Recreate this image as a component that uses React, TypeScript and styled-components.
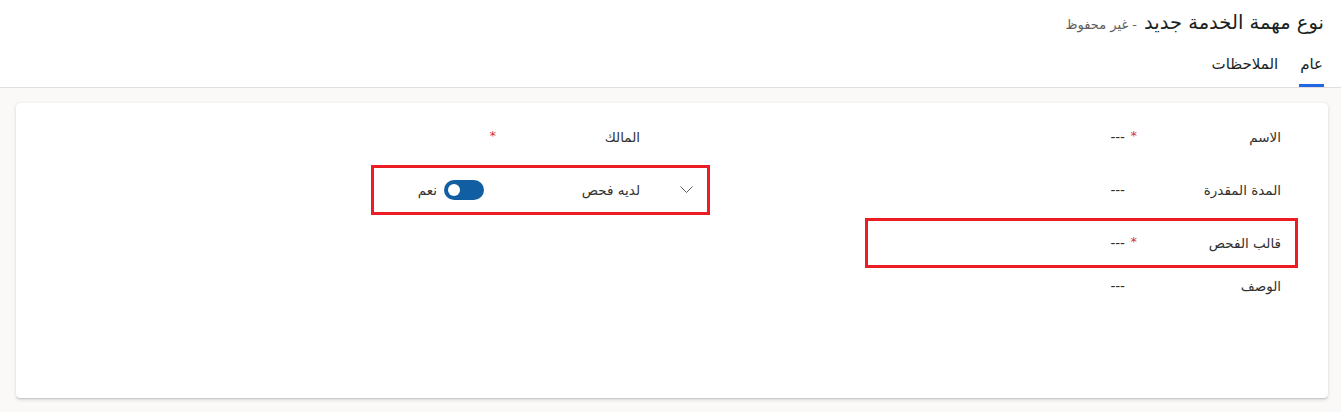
import React from 'react';
import styled, { createGlobalStyle } from 'styled-components';

const GlobalStyle = createGlobalStyle`
  html, body {
    margin: 0;
    padding: 0;
    background: #faf9f8;
    font-family: 'DejaVu Sans', 'Noto Sans', sans-serif;
    color: #323130;
  }
  #root {
    direction: rtl;
  }
`;

interface FieldData {
  label: string;
  required?: boolean;
  value?: string;
  toggle?: boolean;
  chevron?: boolean;
  highlighted?: boolean;
  tall?: boolean;
}

const rightFields: FieldData[] = [
  { label: 'الاسم', required: true, value: '---' },
  { label: 'المدة المقدرة', value: '---' },
  { label: 'قالب الفحص', required: true, value: '---', highlighted: true },
  { label: 'الوصف', value: '---', tall: true },
];

const leftFields: FieldData[] = [
  { label: 'المالك', required: true, value: '' },
  { label: 'لديه فحص', toggle: true, chevron: true, highlighted: true },
];

const App = () => {
  return (
    <>
      <GlobalStyle />
      <Page>
        <Header>
          <TitleRow>
            <Title>نوع مهمة الخدمة جديد</Title>
            <SubTitle>- غير محفوظ</SubTitle>
          </TitleRow>
          <Tabs>
            <Tab active>عام</Tab>
            <Tab>الملاحظات</Tab>
          </Tabs>
        </Header>
        <Main>
          <Card>
            <Column width={433}>
              {rightFields.map((f) => (
                <Field key={f.label} data={f} />
              ))}
            </Column>
            <Column width={339}>
              {leftFields.map((f) => (
                <Field key={f.label} data={f} withIconSlot />
              ))}
            </Column>
          </Card>
        </Main>
      </Page>
    </>
  );
};

const Field = ({
  data,
  withIconSlot,
}: {
  data: FieldData;
  withIconSlot?: boolean;
}) => (
  <FieldRow highlighted={!!data.highlighted} tall={!!data.tall}>
    {withIconSlot && (
      <IconSlot>
        {data.chevron && (
          <svg width='13' height='8' viewBox='0 0 13 8'>
            <polyline
              points='0.5,0.5 6.5,6.5 12.5,0.5'
              fill='none'
              stroke='#605e5c'
              strokeWidth='1'
            />
          </svg>
        )}
      </IconSlot>
    )}
    <Label>{data.label}</Label>
    <Required>{data.required ? '*' : ''}</Required>
    <Value>
      {data.toggle ? (
        <ToggleWrap>
          <Switch>
            <Knob />
          </Switch>
          <ToggleText>نعم</ToggleText>
        </ToggleWrap>
      ) : (
        data.value
      )}
    </Value>
  </FieldRow>
);

export default App;

const Page = styled.div`
  min-height: 412px;
`;

const Header = styled.header`
  background: #ffffff;
  border-bottom: 1px solid #e1dfdd;
  padding: 0 17px;
  height: 87px;
  display: flex;
  flex-direction: column;
`;

const TitleRow = styled.div`
  display: flex;
  align-items: baseline;
  gap: 7px;
  padding-top: 11px;
  height: 30px;
`;

const Title = styled.h1`
  margin: 0;
  font-size: 19.5px;
  font-weight: 400;
  color: #201f1e;
`;

const SubTitle = styled.span`
  font-size: 13px;
  color: #605e5c;
`;

const Tabs = styled.nav`
  display: flex;
  gap: 20px;
  margin-top: auto;
`;

const Tab = styled.div<{ active?: boolean }>`
  font-size: 15px;
  color: #201f1e;
  padding: 0 1px 8px;
  border-bottom: 3px solid ${(p) => (p.active ? '#2266e3' : 'transparent')};
  line-height: 24px;
`;

const Main = styled.main`
  padding: 15px 13px 0 16px;
`;

const Card = styled.section`
  background: #ffffff;
  border-radius: 4px;
  box-shadow: 0 1.6px 3.6px rgba(0, 0, 0, 0.13), 0 0.3px 0.9px rgba(0, 0, 0, 0.11);
  height: 295px;
  box-sizing: border-box;
  padding: 9px 30px 0 0;
  display: flex;
  align-items: flex-start;
  gap: 155px;
`;

const Column = styled.div<{ width: number }>`
  width: ${(p) => p.width}px;
  display: flex;
  flex-direction: column;
  gap: 3px;
`;

const FieldRow = styled.div<{ highlighted: boolean; tall: boolean }>`
  box-sizing: border-box;
  height: ${(p) => (p.tall ? 70 : 50)}px;
  border: 3px solid ${(p) => (p.highlighted ? '#ec1c24' : 'transparent')};
  padding-right: 14px;
  display: flex;
  align-items: ${(p) => (p.tall ? 'flex-start' : 'center')};
  padding-top: ${(p) => (p.tall ? 4 : 0)}px;
  font-size: 13.5px;
`;

const IconSlot = styled.div`
  width: 13px;
  margin-left: 40px;
  display: flex;
  align-items: center;
  justify-content: center;
`;

const Label = styled.div`
  width: 141px;
  color: #323130;
  white-space: nowrap;
`;

const Required = styled.div`
  width: 15px;
  padding-right: 3px;
  box-sizing: border-box;
  color: #d13438;
  font-size: 13px;
  align-self: flex-start;
  margin-top: 13px;
`;

const Value = styled.div`
  color: #323130;
  display: flex;
  align-items: center;
`;

const ToggleWrap = styled.div`
  display: flex;
  align-items: center;
  gap: 7px;
`;

const Switch = styled.div`
  width: 40px;
  height: 20px;
  border-radius: 10px;
  background: #115ea3;
  box-sizing: border-box;
  display: flex;
  align-items: center;
  justify-content: flex-end;
  padding: 0 4px;
  direction: ltr;
  flex-direction: row-reverse;
`;

const Knob = styled.div`
  width: 12px;
  height: 12px;
  border-radius: 50%;
  background: #ffffff;
`;

const ToggleText = styled.span`
  font-size: 13.5px;
`;
